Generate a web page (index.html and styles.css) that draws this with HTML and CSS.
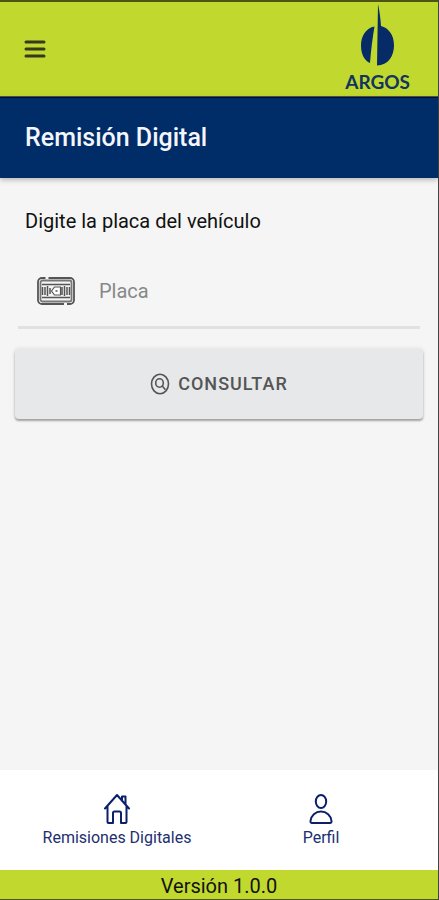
FILE: index.html
```html
<!DOCTYPE html>
<html lang="es">
<head>
<meta charset="utf-8">
<meta name="viewport" content="width=device-width, initial-scale=1">
<title>Remisión Digital</title>
<link rel="stylesheet" href="styles.css">
</head>
<body>
<div class="app">
  <header class="topbar">
    <button class="menu" type="button" aria-label="Menú">
      <svg width="22" height="18" viewBox="0 0 22 18" fill="none" stroke="#35391f" stroke-width="3" stroke-linecap="round"><path d="M2 2h18M2 9h18M2 16h18"/></svg>
    </button>
    <div class="brand">
      <svg class="brand-mark" width="34" height="62" viewBox="0 0 34 62" fill="#062b66"><path d="M13.500 22.500C5 24 0 32 0 41.500c0 9 3.500 15 9 17.500C10 46 11.500 34 13.500 22.500Z"/><path d="M17 0L16 61.500C27 61.500 33 52 33 41.500c0-11-5.500-17.500-13-19.500C19.500 14 18.500 7 17 0Z"/></svg>
      <span class="brand-name">ARGOS</span>
    </div>
  </header>
  <div class="titlebar"><h1 class="title">Remisión Digital</h1></div>
  <main class="content">
    <form class="form">
      <label class="prompt" for="placa">Digite la placa del vehículo</label>
      <div class="field">
        <svg class="plate" width="38" height="28" viewBox="0 0 38 28" fill="none" stroke="#555"><rect x="1" y="1" width="36" height="26" rx="4" stroke-width="1.800"/><rect x="3.500" y="3.500" width="31" height="21" rx="2" stroke="#777" stroke-width="1.800"/><path d="M5 7.500h28M5 20.500h28" stroke-width="1.500"/><path d="M5.500 10v8M8 10v8M10.500 9v10M13 11v6M25 10v8M27.500 9v10M30 10v8M32.500 10v8" stroke-width="1.500"/><path d="M14.500 14l3-4h6v8h-6z" fill="#fff" stroke-width="1.200"/><path d="M18.500 14h2" stroke-width="1.500"/><path d="M8.500 1h3M27 27h3" stroke="#f5f5f5" stroke-width="2"/></svg>
        <input class="input" id="placa" type="text" placeholder="Placa">
      </div>
      <button class="submit" type="button">
        <svg width="20" height="22" viewBox="0 0 20 22" fill="none" stroke="#555" stroke-width="1.600"><ellipse cx="10" cy="11" rx="8.500" ry="9.700"/><ellipse cx="9.500" cy="10" rx="3.800" ry="4.200"/><path d="M12.300 13l2.700 3.200" stroke-linecap="round"/></svg>
        <span>CONSULTAR</span>
      </button>
    </form>
  </main>
  <nav class="tabs">
    <a class="tab" href="#remisiones">
      <svg width="26" height="30" viewBox="0 0 26 30" fill="none" stroke="#0b1f6b" stroke-width="2" stroke-linecap="round" stroke-linejoin="round"><path d="M1 14.500L13 1l12 13.500M3.500 12v16q0 1 1 1H9V19q0-1.500 1.500-1.500h5q1.500 0 1.500 1.500v10h4.500q1 0 1-1V12M18 6V2.500h3.500V10"/></svg>
      <span>Remisiones Digitales</span>
    </a>
    <a class="tab" href="#perfil">
      <svg width="26" height="30" viewBox="0 0 26 30" fill="none" stroke="#0b1f6b" stroke-width="2" stroke-linejoin="round"><ellipse cx="13" cy="7.500" rx="5.200" ry="6.500"/><path d="M13 17.500c-5.500 0-10 4-10.500 9.500q-.2 2 1.500 2h18q1.700 0 1.500-2C23 21.500 18.500 17.500 13 17.500Z"/></svg>
      <span>Perfil</span>
    </a>
  </nav>
  <footer class="version">Versión 1.0.0</footer>
</div>
</body>
</html>
```
FILE: styles.css
```css
* { box-sizing: border-box; }

body {
  margin: 0;
  font-family: Roboto, "Liberation Sans", sans-serif;
  color: #111;
}

.app {
  display: flex;
  flex-direction: column;
  min-height: 100vh;
  background: #f5f5f5;
  border-right: 1px solid #444;
}

.topbar {
  display: flex;
  justify-content: space-between;
  align-items: center;
  height: 97px;
  padding: 0 28px 0 24px;
  background: #c1d92e;
  border-top: 2px solid #4c5514;
  border-bottom: 1px solid #4a5a3a;
}

.menu {
  display: flex;
  padding: 0;
  border: 0;
  background: none;
}

.brand {
  display: flex;
  flex-direction: column;
  align-items: center;
  gap: 6px;
  padding-bottom: 3px;
}

.brand-name {
  font: 700 19px/20px Lato, sans-serif;
  color: #123560;
}

.titlebar {
  display: flex;
  align-items: center;
  height: 81px;
  padding: 0 25px;
  background: #002c67;
  border-top: 1px solid #000a4d;
  box-shadow: 0 2px 5px rgba(0, 0, 0, 0.25);
}

.title {
  margin: 0;
  font-size: 25px;
  font-weight: 500;
  line-height: 32px;
  color: #f4f6fc;
}

.content {
  flex: 1;
  padding: 28px 15px;
}

.form {
  display: flex;
  flex-direction: column;
}

.prompt {
  padding: 0 10px;
  font-size: 20px;
  line-height: 30px;
}

.field {
  display: flex;
  align-items: center;
  gap: 24px;
  height: 73px;
  margin: 20px 3px;
  padding: 0 19px;
  border-bottom: 3px solid #e1e1e1;
}

.plate { flex: none; }

.input {
  flex: 1;
  min-width: 0;
  padding: 0;
  border: 0;
  outline: 0;
  background: none;
  font: 20px/32px Roboto, sans-serif;
  color: #111;
}

.input::placeholder {
  color: #888;
  opacity: 1;
}

.submit {
  display: flex;
  align-items: center;
  justify-content: center;
  gap: 8px;
  height: 70px;
  padding: 0;
  border: 0;
  border-radius: 4px;
  background: #e6e8e9;
  box-shadow: 0 2px 2px rgba(0, 0, 0, 0.3), 0 0 4px rgba(0, 0, 0, 0.12);
  font: 500 18px/24px Roboto, sans-serif;
  letter-spacing: 1px;
  color: #555;
}

.tabs {
  display: flex;
  height: 100px;
  padding: 0 15px;
  background: #fff;
}

.tab {
  display: flex;
  flex: 1;
  flex-direction: column;
  align-items: center;
  justify-content: center;
  gap: 4px;
  padding-top: 2px;
  font-size: 16px;
  line-height: 20px;
  color: #1d2f70;
  text-decoration: none;
}

.version {
  height: 30px;
  background: #c1d92e;
  border-bottom: 1px solid #4c5514;
  font-size: 20px;
  line-height: 32px;
  text-align: center;
}
```
